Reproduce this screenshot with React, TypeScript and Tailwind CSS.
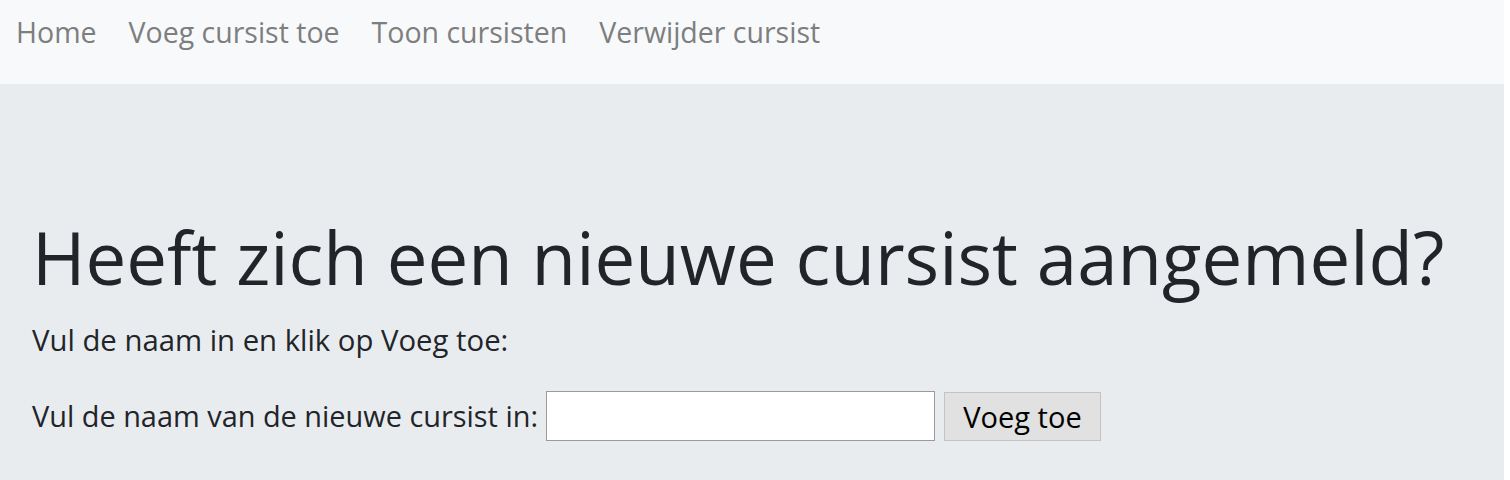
import { useState } from "react";

const NAV_LINKS = ["Home", "Voeg cursist toe", "Toon cursisten", "Verwijder cursist"];

export default function App() {
  const [naam, setNaam] = useState("");

  return (
    <div className="min-h-[480px] bg-white font-['Segoe_UI','Open_Sans',sans-serif]">
      <div className="w-[1504px]">
        <nav className="flex h-[84px] items-start gap-[32px] bg-[#f8f9fa] px-[16px] pt-[15px]">
          {NAV_LINKS.map((link) => (
            <a key={link} href="#" className="text-[28.5px] leading-[1.2] text-[#7d7e7f]">
              {link}
            </a>
          ))}
        </nav>

        <div className="h-[396px] bg-[#e9ecef] px-[32px] pt-[129px]">
          <h1 className="text-[72.6px] leading-[1.2] font-normal text-[#212529]">
            Heeft zich een nieuwe cursist aangemeld?
          </h1>
          <p className="mt-[20px] text-[29.3px] leading-[1.4] text-[#212529]">
            Vul de naam in en klik op Voeg toe:
          </p>
          <form
            className="mt-[30px] flex items-center"
            onSubmit={(e) => e.preventDefault()}
          >
            <label htmlFor="naam" className="text-[28.9px] text-[#212529]">
              Vul de naam van de nieuwe cursist in:
            </label>
            <input
              id="naam"
              value={naam}
              onChange={(e) => setNaam(e.target.value)}
              className="ml-[8px] h-[50px] w-[389px] border border-[#9a9a9a] bg-white px-2 text-[25px] outline-none"
            />
            <button
              type="submit"
              className="ml-[9px] h-[49px] w-[157px] border border-[#c3c3c3] bg-[#e1e1e1] text-[29px] leading-none text-black"
            >
              Voeg toe
            </button>
          </form>
        </div>
      </div>
    </div>
  );
}
